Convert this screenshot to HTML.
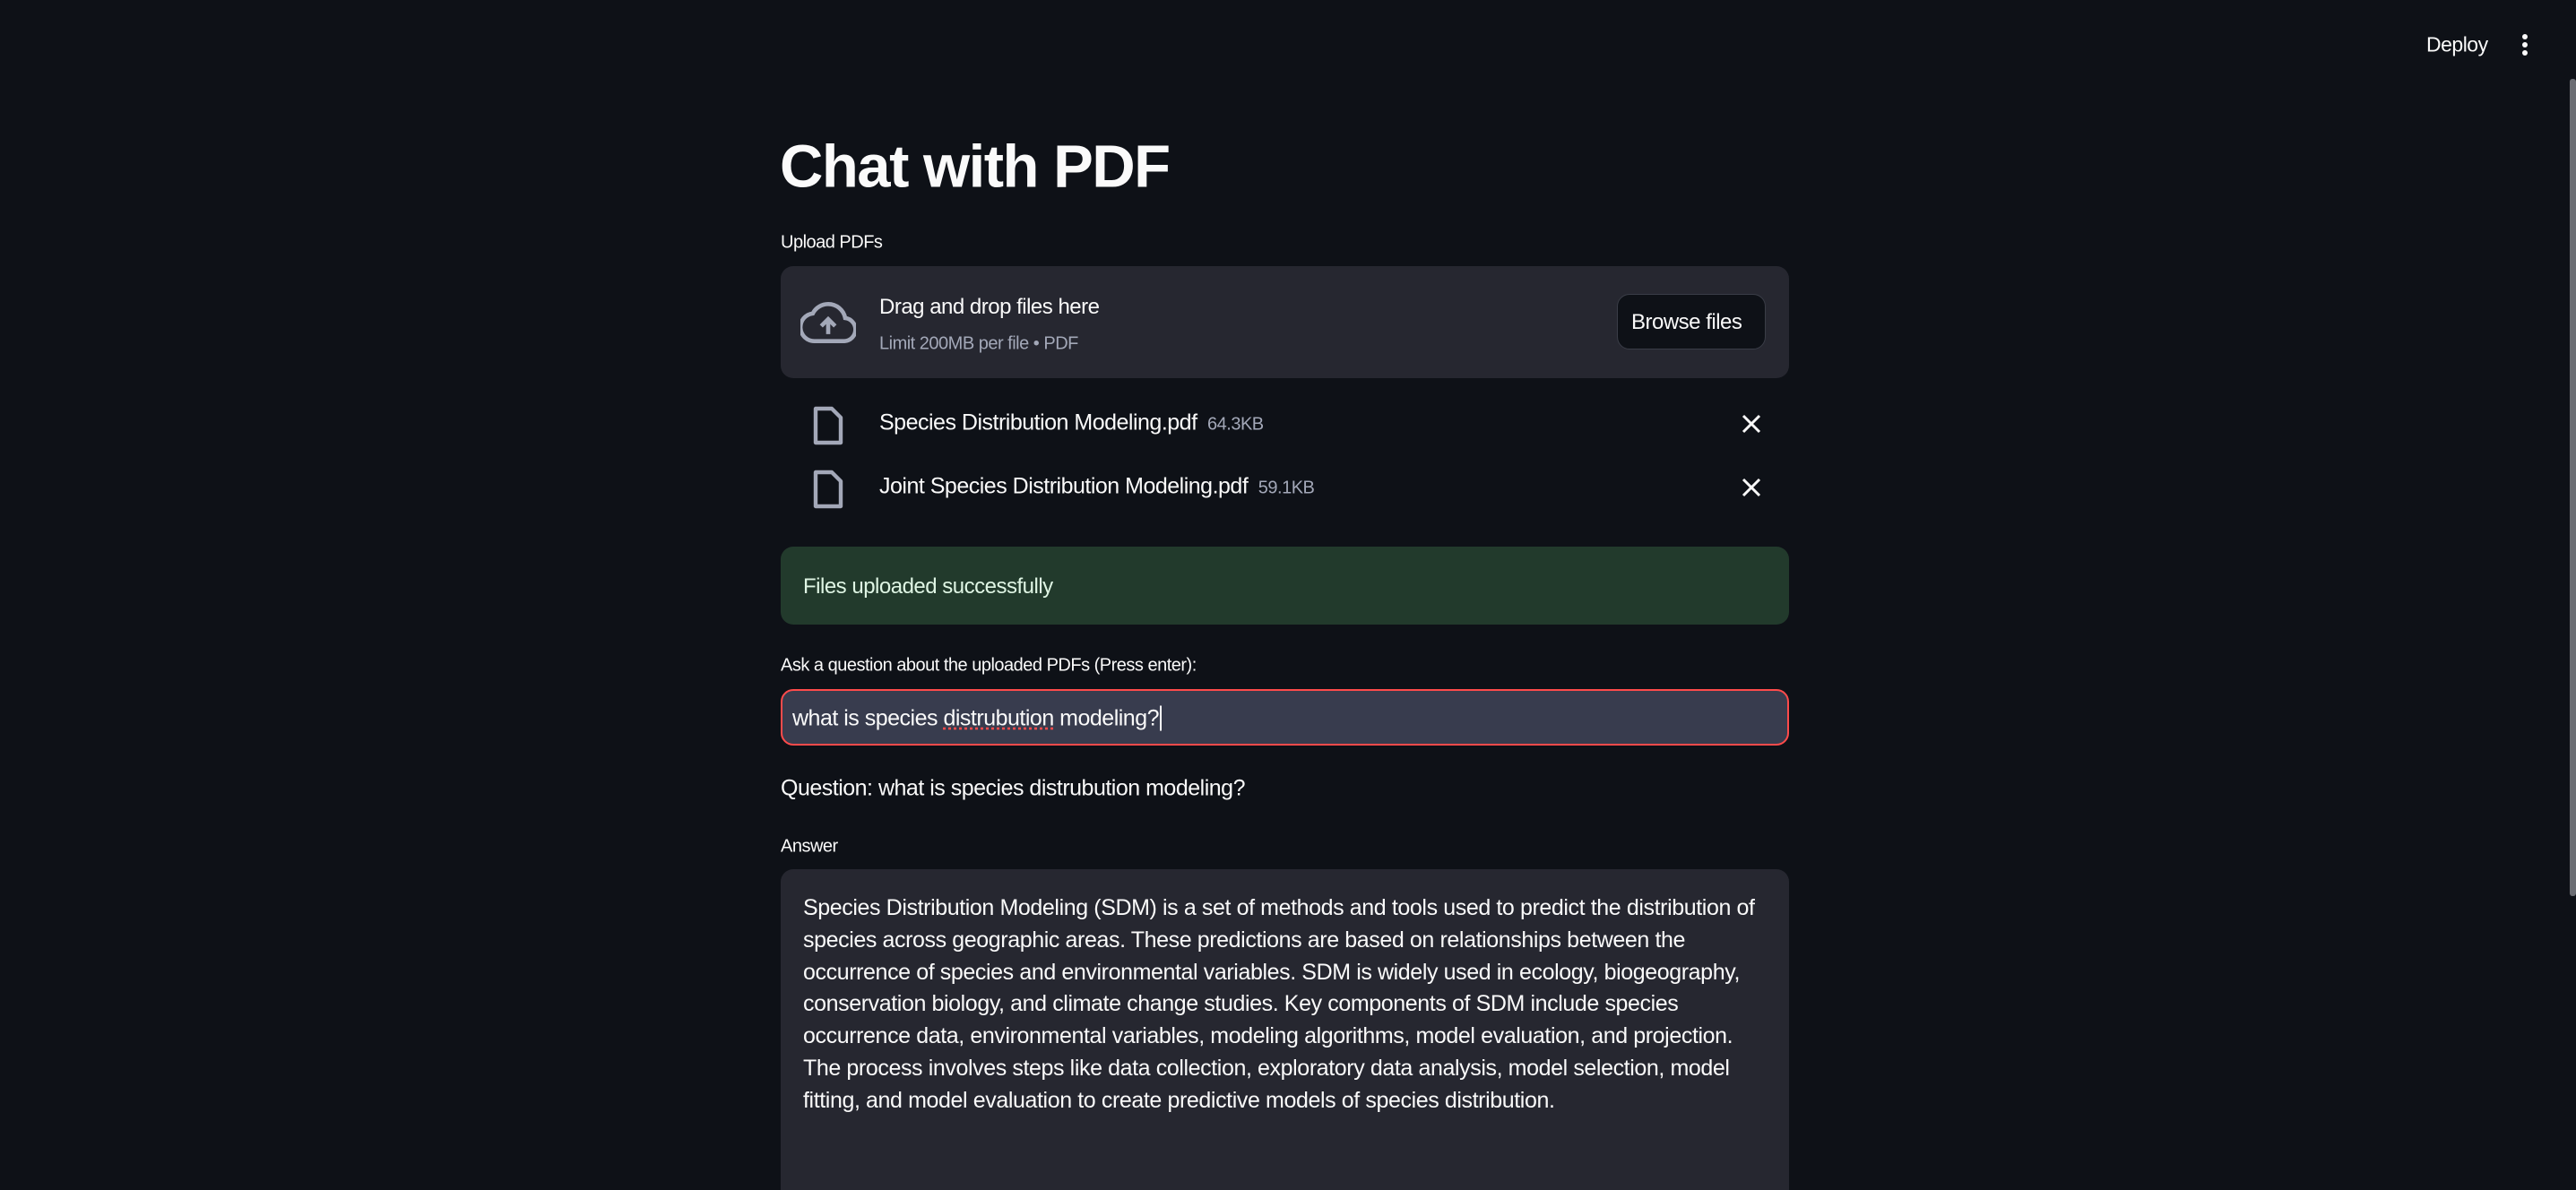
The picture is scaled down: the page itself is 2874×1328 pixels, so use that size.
<!DOCTYPE html>
<html><head><meta charset="utf-8"><style>
*{margin:0;padding:0;box-sizing:border-box}
html,body{width:2874px;height:1328px;overflow:hidden;background:#0e1117;color:#fafafa;font-family:"Liberation Sans",sans-serif}
.a{position:absolute;white-space:nowrap;letter-spacing:-0.5px}
.c{transform:translateY(-50%)}
</style></head><body>
<div class="a c" style="left:2707px;top:50px;font-size:23px">Deploy</div>
<svg class="a" style="left:2810px;top:36px" width="14" height="28"><circle cx="7" cy="5" r="3" fill="#fafafa"/><circle cx="7" cy="14" r="3" fill="#fafafa"/><circle cx="7" cy="23" r="3" fill="#fafafa"/></svg>
<div class="a" style="left:2867px;top:88px;width:7px;height:912px;background:#6b6d73;border-radius:3px"></div>

<div class="a c" style="left:870px;top:186px;font-size:67px;font-weight:bold;letter-spacing:-1.5px">Chat with PDF</div>
<div class="a c" style="left:871px;top:271px;font-size:20px">Upload PDFs</div>

<div class="a" style="left:871px;top:297px;width:1125px;height:125px;background:#262730;border-radius:14px"></div>
<svg class="a" style="left:893px;top:334px" width="62" height="52" viewBox="0 0 24 20"><path d="M19.35 8.04A7.49 7.49 0 0 0 12 2 7.5 7.5 0 0 0 5.35 6.04 6 6 0 0 0 6 18h13a5 5 0 0 0 .35-9.96z" fill="none" stroke="#a3a8b8" stroke-width="1.8"/><path d="M12 15V9M9 11.5L12 8.5l3 3" fill="none" stroke="#a3a8b8" stroke-width="1.8"/></svg>
<div class="a c" style="left:981px;top:343px;font-size:24px">Drag and drop files here</div>
<div class="a c" style="left:981px;top:384px;font-size:20px;color:#a3a8b8">Limit 200MB per file • PDF</div>
<div class="a" style="left:1804px;top:328px;width:166px;height:62px;background:#0e1117;border:1px solid #3a3d47;border-radius:14px"></div>
<div class="a c" style="left:1820px;top:360px;font-size:24px">Browse files</div>

<svg class="a" style="left:906px;top:453px" width="36" height="44" viewBox="0 0 18 22"><path d="M2 1.5h9l5 5v14H2z" fill="none" stroke="#a3a8b8" stroke-width="2.2" stroke-linejoin="round"/></svg>
<div class="a c" style="left:981px;top:472px;font-size:25px">Species Distribution Modeling.pdf <span style="font-size:20px;color:#a3a8b8">&nbsp;64.3KB</span></div>
<svg class="a" style="left:1943px;top:462px" width="22" height="22"><path d="M2 2L20 20M20 2L2 20" stroke="#fafafa" stroke-width="3"/></svg>
<svg class="a" style="left:906px;top:524px" width="36" height="44" viewBox="0 0 18 22"><path d="M2 1.5h9l5 5v14H2z" fill="none" stroke="#a3a8b8" stroke-width="2.2" stroke-linejoin="round"/></svg>
<div class="a c" style="left:981px;top:543px;font-size:25px">Joint Species Distribution Modeling.pdf <span style="font-size:20px;color:#a3a8b8">&nbsp;59.1KB</span></div>
<svg class="a" style="left:1943px;top:533px" width="22" height="22"><path d="M2 2L20 20M20 2L2 20" stroke="#fafafa" stroke-width="3"/></svg>

<div class="a" style="left:871px;top:610px;width:1125px;height:87px;background:#223a2c;border-radius:14px"></div>
<div class="a c" style="left:896px;top:655px;font-size:24px;color:#dff5e4">Files uploaded successfully</div>

<div class="a c" style="left:871px;top:743px;font-size:20px">Ask a question about the uploaded PDFs (Press enter):</div>
<div class="a" style="left:871px;top:769px;width:1125px;height:63px;background:#383c4e;border:2px solid #ff4b4b;border-radius:14px"></div>
<div class="a c" style="left:884px;top:802px;font-size:25px">what is species <span style="text-decoration:underline dotted #ff4b4b">distrubution</span> modeling?<span style="border-left:2px solid #fff;margin-left:1px"></span></div>

<div class="a c" style="left:871px;top:880px;font-size:25px">Question: what is species distrubution modeling?</div>
<div class="a c" style="left:871px;top:945px;font-size:20px">Answer</div>

<div class="a" style="left:871px;top:970px;width:1125px;height:358px;background:#262730;border-radius:14px 14px 0 0"></div>
<div class="a" style="left:896px;top:996px;font-size:25px;letter-spacing:-0.4px;line-height:35.8px">Species Distribution Modeling (SDM) is a set of methods and tools used to predict the distribution of<br>species across geographic areas. These predictions are based on relationships between the<br>occurrence of species and environmental variables. SDM is widely used in ecology, biogeography,<br>conservation biology, and climate change studies. Key components of SDM include species<br>occurrence data, environmental variables, modeling algorithms, model evaluation, and projection.<br>The process involves steps like data collection, exploratory data analysis, model selection, model<br>fitting, and model evaluation to create predictive models of species distribution.</div>
</body></html>
